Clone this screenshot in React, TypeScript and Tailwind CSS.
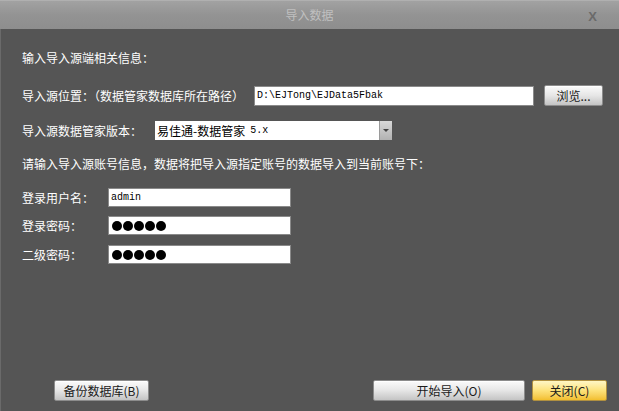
import React from 'react';

// 导入数据 对话框
const CJK = { fontFamily: '"Noto Sans CJK SC", "Liberation Sans", sans-serif' };
const MONO = { fontFamily: '"Liberation Mono", "Noto Sans CJK SC", monospace' };

const GrayButton = ({ label, className = '' }: { label: string; className?: string }) => (
  <button
    className={`h-[21px] border border-[#8c8c8c] rounded-[2px] bg-gradient-to-b from-[#fbfbfb] via-[#e6e6e6] to-[#c4c4c4] text-[12px] leading-none text-[#1a1a1a] shadow-[inset_0_1px_0_#ffffff] ${className}`}
    style={CJK}
  >
    {label}
  </button>
);

const TextBox = ({ children, className = '' }: { children?: React.ReactNode; className?: string }) => (
  <div className={`h-[19px] bg-white border border-[#8a8a8a] flex items-center px-[2px] ${className}`}>
    {children}
  </div>
);

const Dots = () => (
  <div className="flex gap-[1px] pl-[1px]">
    {[0, 1, 2, 3, 4].map((i) => (
      <span key={i} className="w-[10px] h-[10px] rounded-full bg-black" />
    ))}
  </div>
);

export default function App() {
  return (
    <div className="w-[619px] h-[411px] flex flex-col bg-[#555555] text-white overflow-hidden" style={CJK}>
      {/* 标题栏 */}
      <div className="h-[29px] flex-shrink-0 relative flex items-center justify-center bg-gradient-to-b from-[#a2a2a2] via-[#939393] to-[#8e8e8e] border-t border-[#b0b0b0]">
        <span className="text-[12px] text-[#c0c0c0]">导入数据</span>
        <span className="absolute right-[22px] top-[6px] text-[13px] font-bold text-[#6a6a6a]" style={{ fontFamily: '"Liberation Sans", sans-serif' }}>
          X
        </span>
      </div>

      {/* 内容 */}
      <div className="flex-1 flex flex-col pl-[21px] pr-[12px] pb-[10px] border-l border-[#6a6a6a] text-[12px] leading-[16px]">
        <div className="mt-[21px]">输入导入源端相关信息：</div>

        <div className="mt-[19px] flex items-center">
          <span className="w-[232px]">导入源位置：（数据管家数据库所在路径）</span>
          <TextBox className="w-[280px] h-[20px]">
            <span className="text-[10px] text-black" style={MONO}>D:\EJTong\EJData5Fbak</span>
          </TextBox>
          <GrayButton label="浏览..." className="ml-[10px] w-[59px]" />
        </div>

        <div className="mt-[15px] flex items-center">
          <span className="w-[133px]">导入源数据管家版本：</span>
          <div className="flex h-[19px]">
            <div className="w-[224px] bg-white flex items-center px-[2px] text-black text-[12px]">
              易佳通-数据管家 <span className="ml-[5px] text-[10px]" style={MONO}>5.x</span>
            </div>
            <div className="w-[13px] bg-gradient-to-b from-[#d8d8d8] to-[#b2b2b2] border-l border-[#9a9a9a] flex items-center justify-center">
              <span className="w-0 h-0 border-l-[3px] border-r-[3px] border-t-[3px] border-l-transparent border-r-transparent border-t-[#444444]" />
            </div>
          </div>
        </div>

        <div className="mt-[16px]">请输入导入源账号信息，数据将把导入源指定账号的数据导入到当前账号下：</div>

        <div className="mt-[16px] flex items-center">
          <span className="w-[86px]">登录用户名：</span>
          <TextBox className="w-[183px]">
            <span className="text-[10px] text-black" style={MONO}>admin</span>
          </TextBox>
        </div>
        <div className="mt-[9px] flex items-center">
          <span className="w-[86px]">登录密码：</span>
          <TextBox className="w-[183px]">
            <Dots />
          </TextBox>
        </div>
        <div className="mt-[10px] flex items-center">
          <span className="w-[86px]">二级密码：</span>
          <TextBox className="w-[183px]">
            <Dots />
          </TextBox>
        </div>

        <div className="flex-1" />

        {/* 底部按钮 */}
        <div className="flex items-center">
          <GrayButton label="备份数据库(B)" className="ml-[32px] w-[95px]" />
          <div className="flex-1" />
          <GrayButton label="开始导入(O)" className="w-[152px]" />
          <button
            className="ml-[7px] w-[75px] h-[21px] border border-[#b09040] rounded-[2px] bg-gradient-to-b from-[#fff6c4] via-[#fde27a] to-[#f2bf2c] text-[12px] leading-none text-[#1a1a1a]"
            style={CJK}
          >
            关闭(C)
          </button>
        </div>
      </div>
    </div>
  );
}
